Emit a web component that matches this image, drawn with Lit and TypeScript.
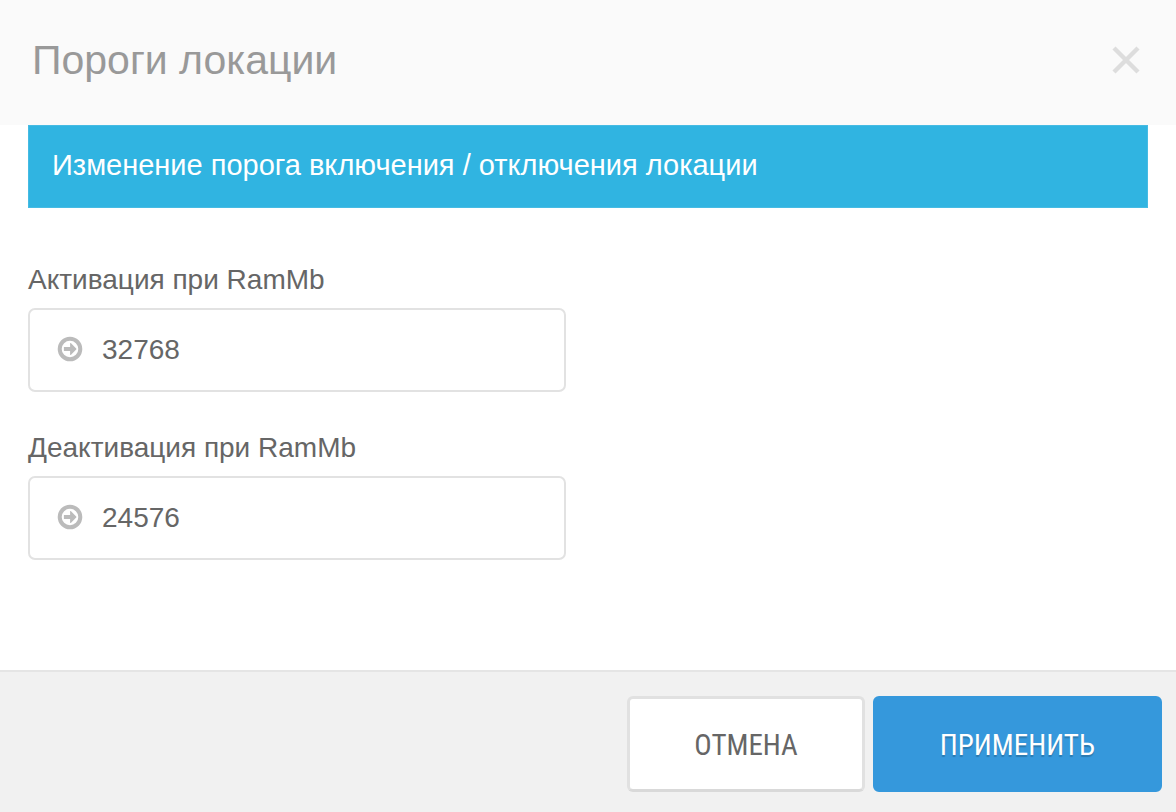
import { LitElement, html, css } from "lit";
import { customElement, property } from "lit/decorators.js";

@customElement("threshold-field")
class ThresholdField extends LitElement {
  @property() label = "";
  @property() value = "";

  static styles = css`
    :host {
      display: block;
    }
    .label {
      display: block;
      font-size: 28px;
      line-height: 40px;
      margin-bottom: 8px;
    }
    .box {
      display: flex;
      align-items: center;
      gap: 19px;
      box-sizing: border-box;
      height: 84px;
      padding: 0 27px;
      border: 2px solid #e2e2e2;
      border-radius: 7px;
      background: #fff;
    }
    .icon {
      flex: none;
      width: 26px;
      height: 26px;
      margin-bottom: 2px;
    }
    .input {
      flex: 1;
      min-width: 0;
      padding: 0;
      border: 0;
      outline: 0;
      background: none;
      color: inherit;
      font: inherit;
      font-size: 28px;
      line-height: 40px;
    }
  `;

  render() {
    return html`
      <label class="label" for="value">${this.label}</label>
      <div class="box">
        <svg class="icon" viewBox="0 0 26 26" aria-hidden="true">
          <circle cx="13" cy="13" r="10.3" fill="none" stroke="#bbb" stroke-width="4" />
          <path d="M6.9 10.9h6.2V7.4q0-.8.7-.3l5.4 5.3q.6.6 0 1.2l-5.4 5.3q-.7.5-.7-.3v-3.5H6.9z" fill="#bbb" />
        </svg>
        <input class="input" id="value" type="text" inputmode="numeric" .value=${this.value} />
      </div>
    `;
  }
}

@customElement("app-root")
class AppRoot extends LitElement {
  static styles = css`
    :host {
      display: flex;
      flex-direction: column;
      min-height: 100vh;
      background: #fff;
      color: #666;
      font-family: "Liberation Sans", Arial, sans-serif;
    }
    .header {
      display: flex;
      align-items: center;
      justify-content: space-between;
      padding: 32px 36px 37px 32px;
      background: #fafafa;
    }
    .title {
      margin: 0;
      color: #999;
      font-size: 41px;
      font-weight: 400;
      line-height: 56px;
    }
    .close {
      display: block;
      padding: 0;
      border: 0;
      background: none;
      cursor: pointer;
    }
    .cross {
      display: block;
      width: 28px;
      height: 28px;
    }
    .content {
      flex: 1;
      padding: 0 28px 40px;
    }
    .notice {
      margin: 0 0 52px;
      padding: 19px 23px 22px;
      border: 1px solid #46bbe3;
      background: #30b4e1;
      color: #fff;
      font-size: 29px;
      line-height: 40px;
    }
    .fields {
      display: grid;
      grid-template-columns: 48%;
      gap: 36px;
    }
    .footer {
      display: flex;
      justify-content: flex-end;
      gap: 8px;
      padding: 24px 14px 20px;
      border-top: 2px solid #e5e5e5;
      background: #f1f1f1;
    }
    .button {
      box-sizing: border-box;
      height: 96px;
      padding: 2px 64px 0;
      border: 3px solid #e1e1e1;
      border-bottom-color: #d9d9d9;
      border-radius: 6px;
      background: #fff;
      color: #666;
      font-family: "Roboto Condensed", Roboto, sans-serif;
      font-size: 29px;
      line-height: 40px;
      text-transform: uppercase;
      cursor: pointer;
    }
    .primary {
      border-color: #3598dc;
      background: #3598dc;
      color: #fff;
      text-shadow: 0 2px 1px rgba(0, 0, 0, 0.2);
    }
  `;

  render() {
    return html`
      <header class="header">
        <h1 class="title">Пороги локации</h1>
        <button class="close" type="button" aria-label="Закрыть">
          <svg class="cross" viewBox="0 0 28 28" aria-hidden="true">
            <path d="M2 2l24 24M26 2L2 26" stroke="#ddd" stroke-width="4.4" />
          </svg>
        </button>
      </header>
      <main class="content">
        <p class="notice">Изменение порога включения / отключения локации</p>
        <div class="fields">
          <threshold-field label="Активация при RamMb" value="32768"></threshold-field>
          <threshold-field label="Деактивация при RamMb" value="24576"></threshold-field>
        </div>
      </main>
      <footer class="footer">
        <button class="button" type="button">Отмена</button>
        <button class="button primary" type="button">Применить</button>
      </footer>
    `;
  }
}
